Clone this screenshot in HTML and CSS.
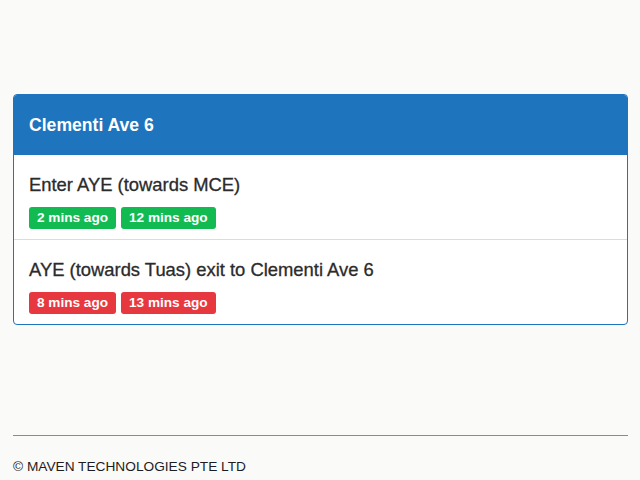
FILE: index.html
```html
<!DOCTYPE html>
<html lang="en">
<head>
  <meta charset="UTF-8" />
  <meta name="viewport" content="width=device-width, initial-scale=1.0"/>
  <title>Clementi Ave 6 - Traffic</title>
  <link rel="stylesheet" href="styles.css">
</head>
<body>

  <main>
    <div class="panel">
      <div class="panel-heading">Clementi Ave 6</div>

      <div class="item">
        <div class="item-title">Enter AYE (towards MCE)</div>
        <div class="badges">
          <span class="badge ok">2 mins ago</span>
          <span class="badge ok">12 mins ago</span>
        </div>
      </div>

      <div class="item">
        <div class="item-title">AYE (towards Tuas) exit to Clementi Ave 6</div>
        <div class="badges">
          <span class="badge bad">8 mins ago</span>
          <span class="badge bad">13 mins ago</span>
        </div>
      </div>
    </div>
  </main>

  <footer>
    <hr>
    <p>&copy; MAVEN TECHNOLOGIES PTE LTD</p>
  </footer>

</body>
</html>
```

FILE: styles.css
```css
* { box-sizing: border-box; }

body {
  margin: 0;
  font-family: 'Liberation Sans', Arial, sans-serif;
  background: #fafaf8;
  color: #333;
  padding: 94px 12px 0 13px;
}

.panel {
  background: white;
  border: 1px solid #1e74bd;
  border-radius: 4px;
  overflow: hidden;
}

.panel-heading {
  background: #1e74bd;
  color: white;
  font-size: 17.6px;
  font-weight: bold;
  height: 60px;
  line-height: 60px;
  padding: 0 15px;
}

.item {
  padding: 19px 15px 10px;
}

.item + .item {
  border-top: 1px solid #dcdcdc;
}

.item-title {
  font-size: 18.4px;
  line-height: 22px;
  color: #2b2b2b;
  -webkit-text-stroke: 0.3px #2b2b2b;
}

.badges {
  display: flex;
  gap: 5px;
  margin-top: 11px;
}

.badge {
  color: white;
  font-size: 13.6px;
  font-weight: bold;
  height: 22px;
  line-height: 22px;
  padding: 0 8px;
  border-radius: 3px;
}

.ok { background: #12bb52; }
.bad { background: #e8383f; }

footer {
  margin-top: 110px;
}

footer hr {
  border: none;
  border-top: 1px solid #8a8a8a;
  margin: 0;
}

footer p {
  margin: 22px 0 0;
  font-size: 13.7px;
  line-height: 18px;
  color: #1c1c24;
}
```
